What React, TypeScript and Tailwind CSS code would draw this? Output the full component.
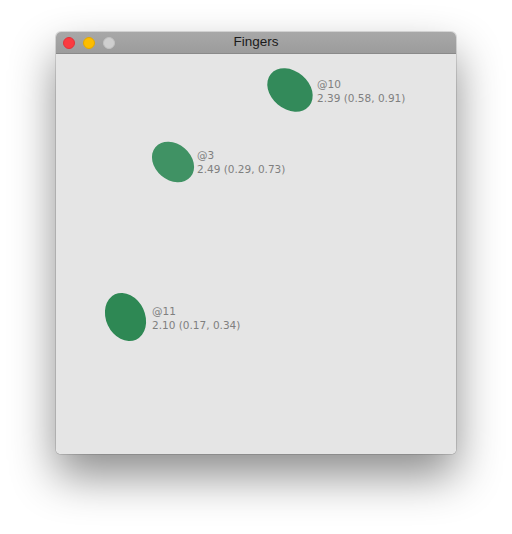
import React from 'react';

type Finger = {
  id: number;
  cx: number;
  cy: number;
  w: number;
  h: number;
  rot: number;
  color: string;
  labelX: number;
  labelY: number;
  size: string;
  pos: string;
};

const FINGERS: Finger[] = [
  { id: 10, cx: 234, cy: 35.5, w: 50, h: 38, rot: 40, color: '#338a5a', labelX: 261, labelY: 23, size: '2.39', pos: '(0.58, 0.91)' },
  { id: 3, cx: 117, cy: 107.5, w: 46, h: 36, rot: 40, color: '#409264', labelX: 141, labelY: 94, size: '2.49', pos: '(0.29, 0.73)' },
  { id: 11, cx: 69, cy: 262.5, w: 39, h: 50, rot: -25, color: '#2e8854', labelX: 96, labelY: 250, size: '2.10', pos: '(0.17, 0.34)' },
];

export default function App() {
  return (
    <div className="w-[512px] h-[534px] bg-white flex justify-center pt-[32px] overflow-hidden">
      <div className="w-[400px] h-[422px] flex flex-col rounded-[5px] overflow-hidden shadow-[0_22px_45px_rgba(0,0,0,0.45),0_0_0_1px_rgba(0,0,0,0.12)]">
        {/* title bar */}
        <div className="h-[22px] relative flex items-center bg-gradient-to-b from-[#a8a8a8] to-[#9c9c9c] border-b border-[#8a8a8a]">
          <div className="flex items-center gap-[8px] pl-[7px]">
            <span className="w-[12px] h-[12px] rounded-full bg-[#fb3b40] border border-[#e0333a]" />
            <span className="w-[12px] h-[12px] rounded-full bg-[#fdbd00] border border-[#e3a800]" />
            <span className="w-[12px] h-[12px] rounded-full bg-[#cfcfcf] border border-[#c2c2c2]" />
          </div>
          <div className="absolute inset-0 flex items-center justify-center text-[13.5px] text-[#1a1a1a] font-['Liberation_Sans',sans-serif] pointer-events-none">
            Fingers
          </div>
        </div>
        {/* canvas */}
        <div className="relative flex-1 bg-[#e5e5e5]">
          {FINGERS.map((f) => (
            <React.Fragment key={f.id}>
              <div
                className="absolute rounded-[50%]"
                style={{
                  left: f.cx - f.w / 2,
                  top: f.cy - f.h / 2,
                  width: f.w,
                  height: f.h,
                  background: f.color,
                  transform: `rotate(${f.rot}deg)`,
                }}
              />
              <div
                className="absolute text-[10.5px] leading-[14px] text-[#7f7f7f] font-['DejaVu_Sans',sans-serif] whitespace-nowrap"
                style={{ left: f.labelX, top: f.labelY }}
              >
                <div>@{f.id}</div>
                <div>
                  {f.size} {f.pos}
                </div>
              </div>
            </React.Fragment>
          ))}
        </div>
      </div>
    </div>
  );
}
